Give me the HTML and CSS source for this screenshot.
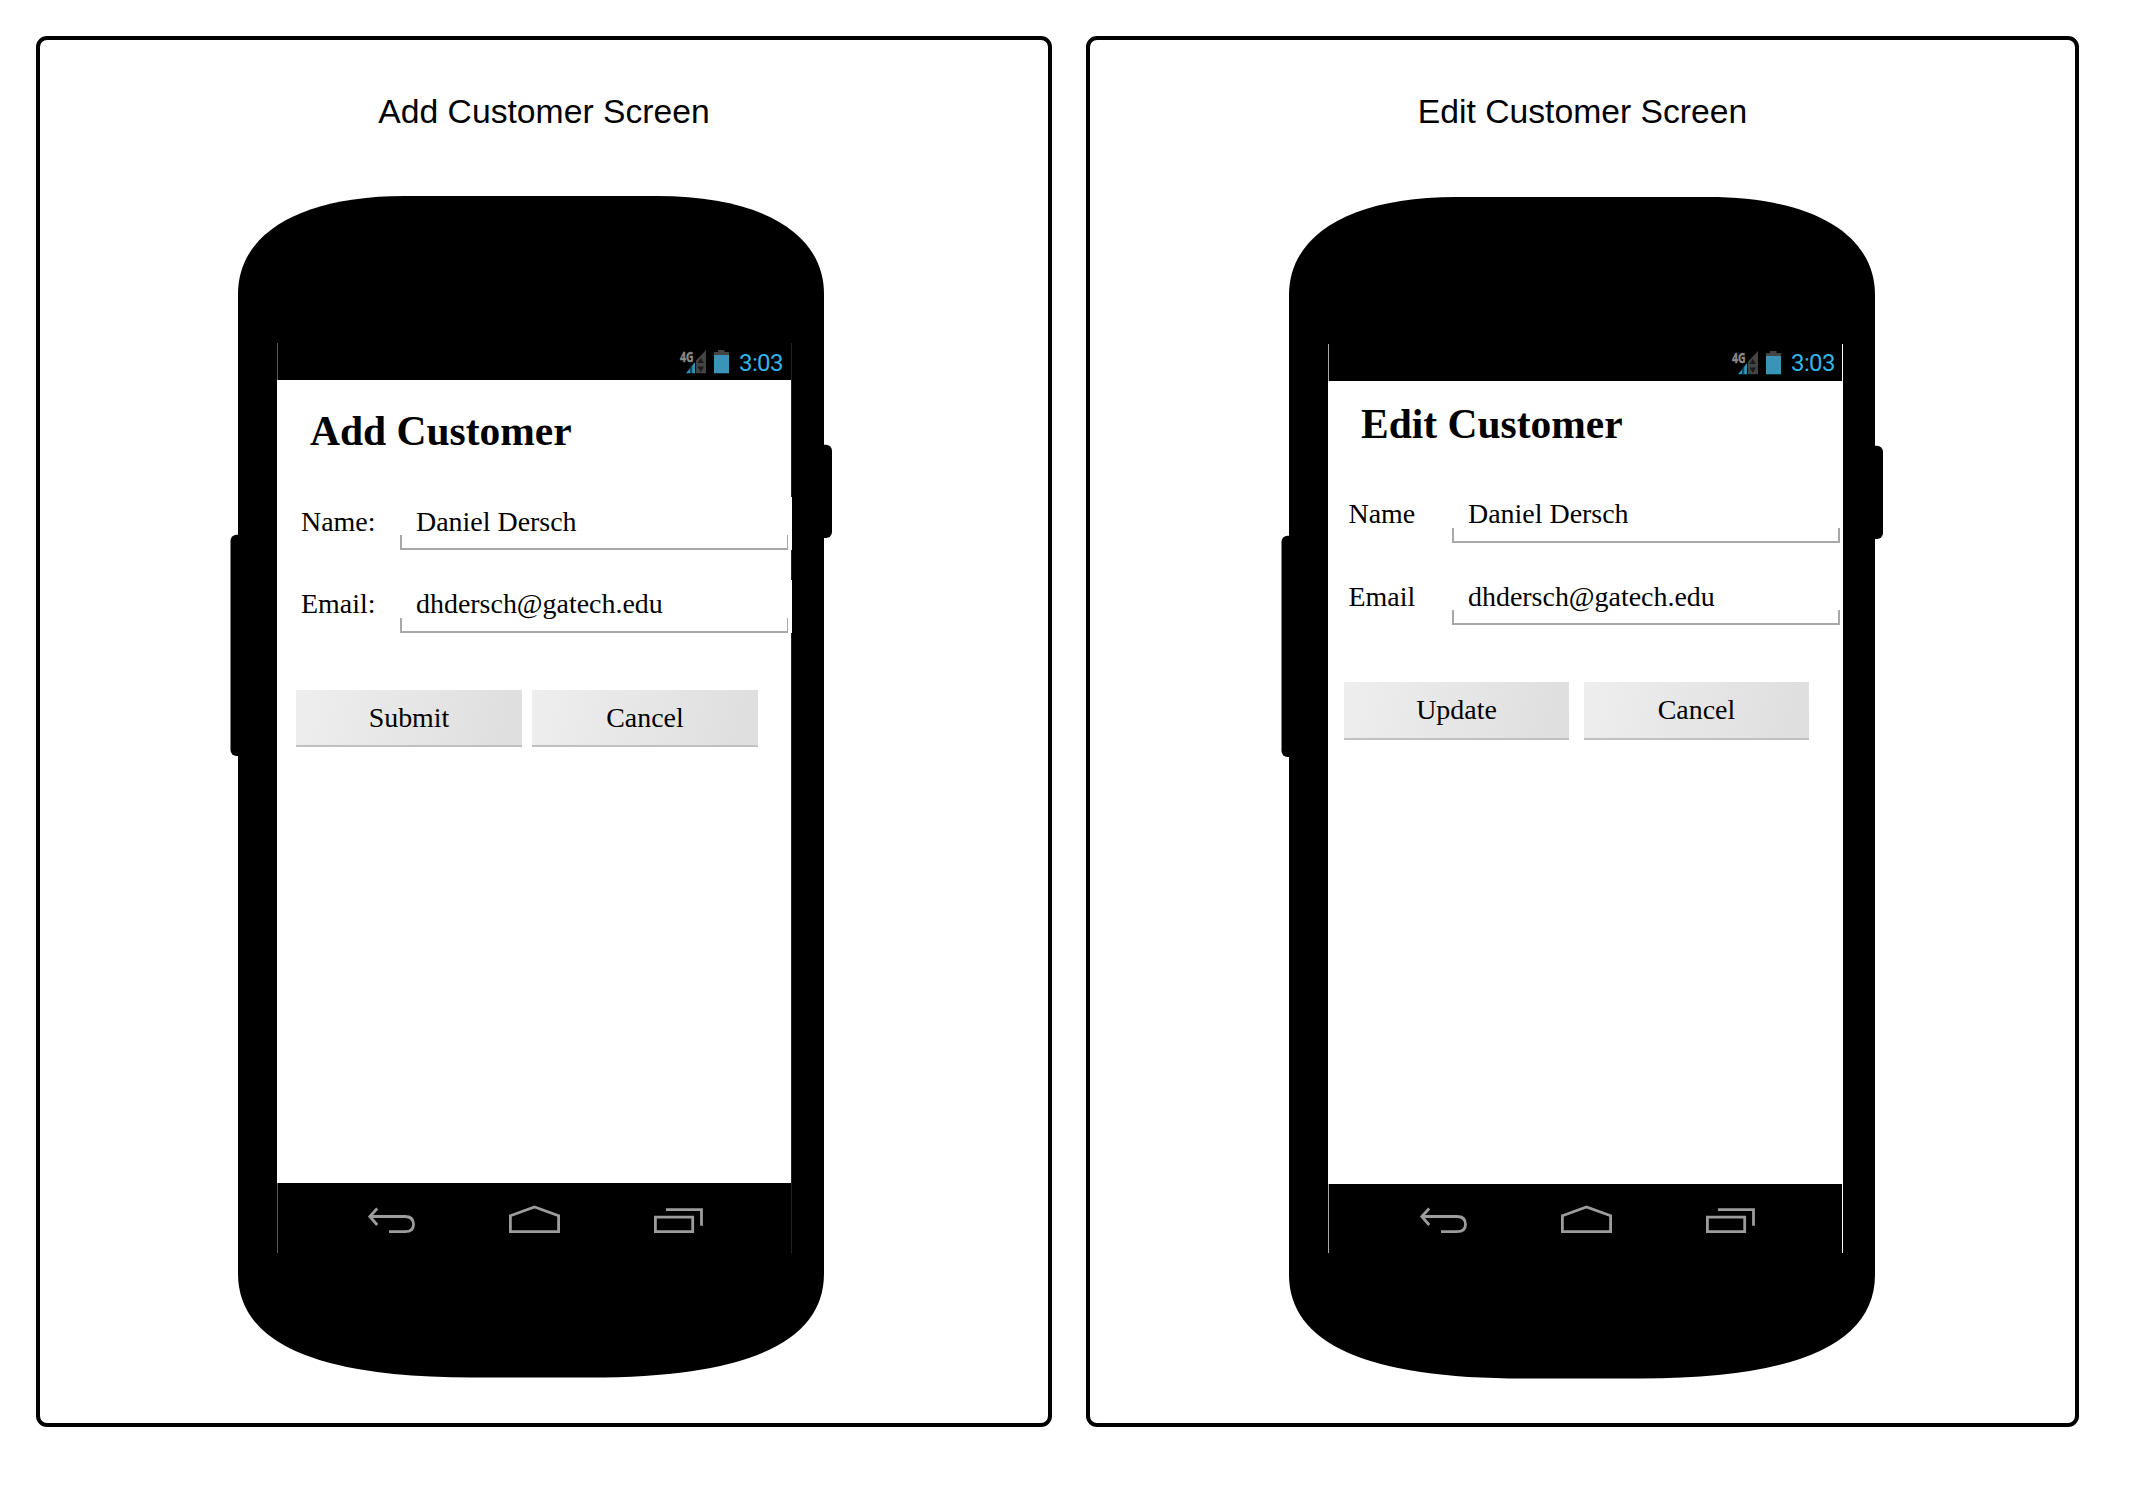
FILE: index.html
```html
<!DOCTYPE html>
<html lang="en">
<head>
<meta charset="utf-8">
<title>Customer Screens</title>
<link rel="stylesheet" href="styles.css">
</head>
<body>
<svg class="defs" width="0" height="0" aria-hidden="true">
  <symbol id="shell" viewBox="0 0 604 1183">
    <rect x="0.5" y="338.7" width="40" height="221.3" rx="6"/>
    <rect x="560" y="248.7" width="42" height="93.3" rx="6"/>
    <path d="M8 98C8 37.500 70 0 175 0H427C532 0 594 37.500 594 98V1077.500Q594 1181.500 360 1181.500H242Q8 1181.500 8 1077.500Z"/>
  </symbol>
  <symbol id="signal" viewBox="0 0 50 26">
    <path fill="#444" d="M16 11.500L26 1V24.300H16Z"/>
    <path fill="#2e93bb" d="M6 24.300L15 13V24.300Z"/>
    <path stroke="#04222e" stroke-width=".8" d="M10.400 16V24.300M11.700 14V24.300"/>
    <path fill="#1c1c1c" d="M17.500 14L20.800 9L24 14ZM17.500 17.500H24L20.800 23Z"/>
    <path fill="#444" d="M34 3H38V1H44.500V3H49V6H34Z"/>
    <path fill="#3a94b8" d="M34 6H49V24.300H34Z"/>
  </symbol>
  <symbol id="back" viewBox="0 0 49 32">
    <path d="M10.200 5.500L2.800 13.500L10.200 22M2.800 13.500H38Q46.500 13.500 46.500 21.500Q46.500 28.700 38 28.700H22"/>
  </symbol>
  <symbol id="home" viewBox="0 0 53 32">
    <path d="M2.400 12.700L26.500 4L50.600 12.700V28.700H2.400Z"/>
  </symbol>
  <symbol id="recent" viewBox="0 0 51 32">
    <path d="M2.400 14.200H39.700V28.700H2.400ZM13 6.600H48.500V22.800"/>
  </symbol>
</svg>

<main class="board">
  <section class="frame frame-add">
    <h1 class="title">Add Customer Screen</h1>
    <div class="phone">
      <svg class="shell"><use href="#shell"/></svg>
      <div class="screen">
        <div class="status">
          <svg class="signal" viewBox="0 0 50 26"><use href="#signal"/><text class="net" x="0" y="12.5" textLength="13.6" lengthAdjust="spacingAndGlyphs">4G</text></svg>
          <span class="time">3:03</span>
        </div>
        <div class="app">
          <h2 class="heading">Add Customer</h2>
          <div class="row"><label class="label">Name:</label><div class="field">Daniel Dersch</div></div>
          <div class="row row-raised"><label class="label">Email:</label><div class="field">dhdersch@gatech.edu</div></div>
          <div class="actions"><button class="btn">Submit</button><button class="btn">Cancel</button></div>
        </div>
        <div class="nav">
          <svg class="back"><use href="#back"/></svg>
          <svg class="home"><use href="#home"/></svg>
          <svg class="recent"><use href="#recent"/></svg>
        </div>
      </div>
    </div>
  </section>

  <section class="frame frame-edit">
    <h1 class="title">Edit Customer Screen</h1>
    <div class="phone">
      <svg class="shell"><use href="#shell"/></svg>
      <div class="screen">
        <div class="status">
          <svg class="signal" viewBox="0 0 50 26"><use href="#signal"/><text class="net" x="0" y="12.5" textLength="13.6" lengthAdjust="spacingAndGlyphs">4G</text></svg>
          <span class="time">3:03</span>
        </div>
        <div class="app">
          <h2 class="heading">Edit Customer</h2>
          <div class="row row-raised"><label class="label">Name</label><div class="field">Daniel Dersch</div></div>
          <div class="row"><label class="label">Email</label><div class="field">dhdersch@gatech.edu</div></div>
          <div class="actions"><button class="btn">Update</button><button class="btn">Cancel</button></div>
        </div>
        <div class="nav">
          <svg class="back"><use href="#back"/></svg>
          <svg class="home"><use href="#home"/></svg>
          <svg class="recent"><use href="#recent"/></svg>
        </div>
      </div>
    </div>
  </section>
</main>
</body>
</html>
```
FILE: styles.css
```css
*,
*::after { box-sizing: border-box; }

body {
  margin: 0;
  background: #fff;
  color: #000;
}

.defs { display: block; }

.board {
  display: flex;
  gap: 34px;
  padding: 36px 0 0 36px;
}

.frame {
  height: 1391px;
  border: 4px solid #000;
  border-radius: 11px;
  padding-top: 52px;
}

.frame-add {
  width: 1016px;
  --edge-left: #555;
  --edge-right: #222;
  --app-edge: #222;
}

.frame-edit {
  width: 993px;
  --edge-left: #aaa;
  --edge-right: #fff;
  --app-edge: #fff;
}

.title {
  margin: 0;
  font: 400 33.7px/38px "Liberation Sans", Arial, sans-serif;
  text-align: center;
}

.phone {
  position: relative;
  width: 604px;
  height: 1183px;
  margin: 66px 0 0 190px;
  padding: 147px 0 0 47px;
}

.frame-edit .phone {
  margin: 67px 0 0 191px;
}

.shell {
  position: absolute;
  inset: 0;
  width: 604px;
  height: 1183px;
}

.screen {
  position: relative;
  width: 515px;
}

.status,
.nav {
  display: flex;
  background: #000;
  border-left: 1px solid var(--edge-left);
  border-right: 1px solid var(--edge-right);
}

.status {
  height: 37px;
  justify-content: flex-end;
  padding: 6px 7px 0 0;
}

.frame-edit .status { padding-right: 6px; }

.signal {
  width: 50px;
  height: 26px;
  margin-right: 9px;
  overflow: visible;
}

.net {
  font: 700 14.6px "Open Sans", sans-serif;
  fill: #8c8c8c;
  stroke: #8c8c8c;
  stroke-width: 0.4;
}

.time {
  width: 45px;
  padding-top: 1px;
  color: #33b5e5;
  font: 400 24px/26px Roboto, sans-serif;
  letter-spacing: -0.6px;
}

.frame-edit .time { padding-top: 0; }

.app {
  height: 803px;
  padding-top: 28px;
  background: #fff;
  border-right: 1px solid var(--app-edge);
  font: 27.95px/30px "Liberation Serif", "Times New Roman", serif;
}

.frame-edit .app { padding-top: 20px; }

.heading {
  margin: 0 0 43px 33px;
  font-size: 41.5px;
  line-height: 46px;
  font-weight: 700;
}

.row {
  display: flex;
  height: 53px;
  padding-left: 24px;
  --text-top: 10px;
}

.row-raised { --text-top: 9px; }

.row + .row { margin-top: 30px; }

.frame-edit .row { padding-left: 20.5px; }
.frame-edit .row + .row { margin-top: 29px; }

.label {
  flex: none;
  width: 99px;
  padding-top: var(--text-top);
}

.frame-edit .label { width: 103.5px; }

.field {
  position: relative;
  flex: none;
  width: 392px;
  padding: var(--text-top) 0 0 16px;
  background: #fff;
}

.frame-edit .field { width: 390px; }

.field::after {
  content: "";
  position: absolute;
  left: 0;
  bottom: 0;
  width: 388px;
  height: 15px;
  border: 2px solid #a8a8a8;
  border-top: 0;
}

.frame-add .field::after { border-right-width: 1px; }

.actions {
  display: flex;
  gap: 10px;
  margin: 57px 0 0 19px;
}

.btn {
  width: 226px;
  height: 57px;
  padding: 0;
  border: 0;
  border-bottom: 2px solid #c0c0c0;
  background: linear-gradient(104deg, #eee, #dedede);
  color: #000;
  font: inherit;
}

.frame-edit .actions {
  gap: 15px;
  margin-left: 16px;
}

.frame-edit .btn {
  width: 225px;
  height: 58px;
  padding-bottom: 1px;
}

.nav {
  height: 70px;
  padding: 20px 0 0 89px;
}

.frame-edit .nav {
  height: 69px;
  padding: 19px 0 0 89.5px;
}

.nav svg {
  height: 32px;
  fill: none;
  stroke: #9c9c9c;
  stroke-width: 2.8;
}

.back { width: 49px; }
.home { width: 53px; margin-left: 92px; }
.recent { width: 51px; margin-left: 92px; }
```
